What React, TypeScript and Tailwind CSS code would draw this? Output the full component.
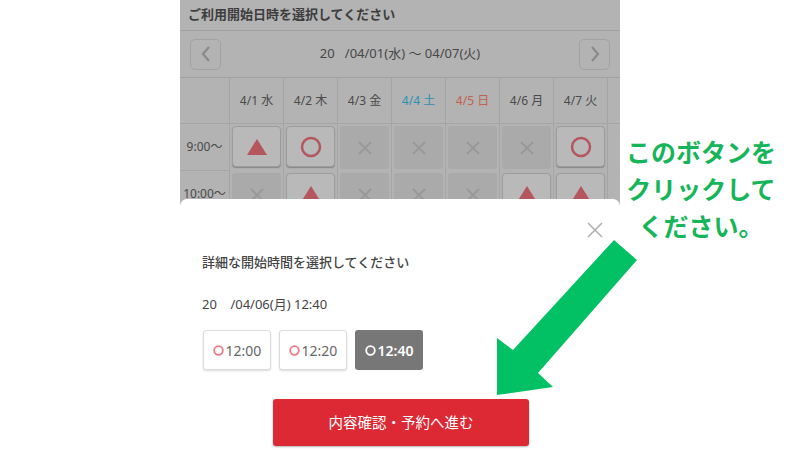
import React from 'react';

type Slot = 'tri' | 'circle' | 'x';

const days = [
  { label: '4/1 水', color: 'text-[#4a4a4a]' },
  { label: '4/2 木', color: 'text-[#4a4a4a]' },
  { label: '4/3 金', color: 'text-[#4a4a4a]' },
  { label: '4/4 土', color: 'text-[#2f8fb3]' },
  { label: '4/5 日', color: 'text-[#c4604f]' },
  { label: '4/6 月', color: 'text-[#4a4a4a]' },
  { label: '4/7 火', color: 'text-[#4a4a4a]' },
];

const rows: { time: string; slots: Slot[] }[] = [
  { time: '9:00〜', slots: ['tri', 'circle', 'x', 'x', 'x', 'x', 'circle'] },
  { time: '10:00〜', slots: ['x', 'tri', 'x', 'x', 'x', 'tri', 'tri'] },
];

const font = { fontFamily: '"Noto Sans", "Noto Sans CJK JP", sans-serif' };

const Mark: React.FC<{ kind: Slot }> = ({ kind }) => {
  if (kind === 'tri') {
    return (
      <svg width="20" height="16" viewBox="0 0 20 16">
        <polygon points="10,0 20,16 0,16" fill="#b5565e" />
      </svg>
    );
  }
  if (kind === 'circle') {
    return (
      <svg width="22" height="22" viewBox="0 0 22 22">
        <circle cx="11" cy="11" r="9" fill="none" stroke="#b5565e" strokeWidth="2.5" />
      </svg>
    );
  }
  return (
    <svg width="16" height="16" viewBox="0 0 16 16">
      <path d="M2 2 L14 14 M14 2 L2 14" stroke="#999999" strokeWidth="2" />
    </svg>
  );
};

const Cell: React.FC<{ kind: Slot }> = ({ kind }) => (
  <div className="w-[54px] h-full border-r border-[#a5a5a5] p-[2px]">
    {kind === 'x' ? (
      <div className="h-full rounded-[3px] bg-[#aaaaaa] flex items-center justify-center">
        <Mark kind={kind} />
      </div>
    ) : (
      <div className="h-[41px] rounded-[4px] bg-[#b9b9b9] border border-[#9d9d9d] shadow-[0_1px_1px_rgba(0,0,0,0.25)] flex items-center justify-center">
        <Mark kind={kind} />
      </div>
    )}
  </div>
);

const Chevron: React.FC<{ dir: 'l' | 'r' }> = ({ dir }) => (
  <div className="w-[31px] h-[31px] rounded-[5px] border border-[#a2a2a2] flex items-center justify-center">
    <svg width="10" height="16" viewBox="0 0 10 16">
      <path
        d={dir === 'l' ? 'M8 1 L2 8 L8 15' : 'M2 1 L8 8 L2 15'}
        fill="none"
        stroke="#8a8a8a"
        strokeWidth="2.2"
      />
    </svg>
  </div>
);

const TimeButton: React.FC<{ t: string; active?: boolean }> = ({ t, active }) => (
  <div
    className={`w-[68px] h-[40px] rounded-[3px] flex items-center justify-center gap-[2px] text-[14px] ${
      active
        ? 'bg-[#777777] text-white font-semibold'
        : 'bg-white border border-[#dcdcdc] text-[#666666] shadow-[0_1px_2px_rgba(0,0,0,0.15)]'
    }`}
  >
    <svg width="11" height="11" viewBox="0 0 11 11">
      <circle cx="5.5" cy="5.5" r="4.3" fill="none" stroke={active ? '#ffffff' : '#ec7b86'} strokeWidth="1.8" />
    </svg>
    <span>{t}</span>
  </div>
);

export default function App() {
  return (
    <div className="relative w-[800px] h-[450px] bg-white overflow-hidden flex" style={font}>
      <div className="w-[180px] shrink-0" />

      <div className="w-[440px] h-[450px] shrink-0 bg-[#b3b3b3] flex flex-col">
        <div className="h-[199px] shrink-0 overflow-hidden flex flex-col">
          <div className="h-[31px] shrink-0 border-b border-[#a0a0a0] px-[8px] flex items-center text-[13px] font-bold text-[#3d3d3d]">
            ご利用開始日時を選択してください
          </div>
          <div className="h-[47px] shrink-0 border-b border-[#a0a0a0] px-[10px] flex items-center justify-between">
            <Chevron dir="l" />
            <div className="text-[13px] text-[#474747] whitespace-pre">20   /04/01(水) 〜 04/07(火)</div>
            <Chevron dir="r" />
          </div>
          <div className="flex flex-col shrink-0">
            <div className="h-[46px] shrink-0 flex border-b border-[#a5a5a5]">
              <div className="w-[50px] border-r border-[#a5a5a5]" />
              {days.map((d) => (
                <div
                  key={d.label}
                  className={`w-[54px] border-r border-[#a5a5a5] flex items-center justify-center text-[12px] ${d.color}`}
                >
                  {d.label}
                </div>
              ))}
            </div>
            {rows.map((r) => (
              <div key={r.time} className="h-[47px] shrink-0 flex">
                <div className="w-[50px] border-r border-b border-[#a5a5a5] flex items-center justify-center text-[12px] text-[#4a4a4a]">
                  {r.time}
                </div>
                {r.slots.map((s, i) => (
                  <Cell key={i} kind={s} />
                ))}
              </div>
            ))}
          </div>
        </div>

        <div className="flex-1 bg-white rounded-t-[7px] flex flex-col px-[22px]">
          <div className="flex justify-end pt-[23px] mr-[-5px]">
            <svg width="16" height="16" viewBox="0 0 16 16">
              <path d="M1 1 L15 15 M15 1 L1 15" stroke="#b0b0b0" strokeWidth="1.6" />
            </svg>
          </div>
          <div className="mt-[15px] text-[13px] font-medium text-[#444444] leading-[18px]">
            詳細な開始時間を選択してください
          </div>
          <div className="mt-[24px] text-[13px] text-[#444444] leading-[18px] whitespace-pre">20    /04/06(月) 12:40</div>
          <div className="mt-[17px] flex gap-[8px] pl-[1px]">
            <TimeButton t="12:00" />
            <TimeButton t="12:20" />
            <TimeButton t="12:40" active />
          </div>
          <div className="mt-[29px] flex justify-center pl-[2px]">
            <div className="w-[256px] h-[47px] rounded-[3px] bg-[#dc2934] shadow-[0_1px_2px_rgba(0,0,0,0.3)] flex items-center justify-center text-white text-[14.5px]">
              内容確認・予約へ進む
            </div>
          </div>
        </div>
      </div>

      <div className="w-[180px] shrink-0 pt-[133px] flex flex-col items-center">
        <div
          className="text-[25px] font-bold leading-[37px] text-[#16b55a] text-center pr-[18px]"
          style={{ fontFamily: '"Noto Sans CJK JP", sans-serif' }}
        >
          このボタンを
          <br />
          クリックして
          <br />
          ください。
        </div>
      </div>

      <svg className="absolute left-0 top-0 pointer-events-none" width="800" height="450" viewBox="0 0 800 450">
        <polygon
          points="614,240 637,260 538,373 553,387 497,395 497,338 513,350"
          fill="#02c064"
        />
      </svg>
    </div>
  );
}
